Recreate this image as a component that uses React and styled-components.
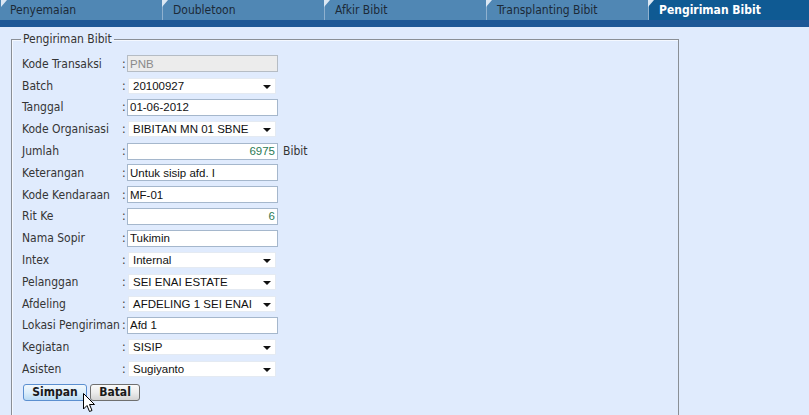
import React from 'react';
import styled, { createGlobalStyle } from 'styled-components';

const GlobalStyle = createGlobalStyle`
  html, body {
    margin: 0;
    padding: 0;
    background: #e0ebfd;
    overflow: hidden;
  }
  body {
    font-family: "DejaVu Sans Condensed", "DejaVu Sans", sans-serif;
    font-size: 12px;
    color: #333;
  }
`;

const Page = styled.div`
  width: 809px;
  height: 415px;
  overflow: hidden;
  background: #e0ebfd;
`;

const TabBar = styled.div`
  display: flex;
  height: 20px;
  background: #5087b4;
`;

const Tab = styled.div`
  position: relative;
  width: 162px;
  flex: none;
  box-sizing: border-box;
  line-height: 20px;
  font-size: 12px;
  color: ${(p) => (p.active ? '#ffffff' : '#1c2a38')};
  font-weight: ${(p) => (p.active ? 'bold' : 'normal')};
  background: ${(p) => (p.active ? '#0f5a93' : '#5087b4')};
  border-left: 1px solid ${(p) => (p.first ? 'transparent' : '#8fb1cf')};
  padding-left: ${(p) => (p.first ? '9px' : '10px')};

  &::before {
    content: '';
    position: absolute;
    left: ${(p) => (p.first ? '0' : '-1px')};
    top: 0;
    width: 0;
    height: 0;
    border-top: 7px solid #dbe7f3;
    border-right: 6px solid transparent;
  }
`;

const Strip = styled.div`
  height: 7px;
  background: #1e5897;
`;

const Content = styled.div`
  padding: 5px 0 0 11px;
`;

const Fieldset = styled.fieldset`
  margin: 0;
  width: 668px;
  height: 420px;
  box-sizing: border-box;
  padding: 1px 0 0 10px;
  border: 1px solid #8a8f96;
  box-shadow: inset 1px 1px 0 #f4f8ff;
`;

const Legend = styled.legend`
  padding: 0 2px;
  margin-left: -1px;
  font-size: 12px;
  line-height: 14px;
  color: #333;
`;

const Form = styled.div`
  display: grid;
  grid-template-columns: 100px 5px auto;
  grid-auto-rows: 21.8px;
  align-items: center;
  margin-top: 6px;
`;

const Label = styled.div`
  font-size: 12px;
  color: #353535;
  white-space: nowrap;
`;

const Colon = styled.div`
  font-size: 12px;
  color: #353535;
`;

const Field = styled.div`
  display: flex;
  align-items: center;
  gap: 5px;
`;

const TextInput = styled.input`
  box-sizing: border-box;
  width: 151px;
  height: 17px;
  margin: 0;
  padding: 0 2px;
  border: 1px solid ${(p) => (p.disabled ? '#b5bcc4' : '#a5b7cc')};
  background: ${(p) => (p.disabled ? '#ececec' : '#ffffff')};
  font-family: "Liberation Sans", Arial, sans-serif;
  font-size: 11.5px;
  color: ${(p) => (p.disabled ? '#8a8a8a' : p.numeric ? '#2b7a55' : '#111')};
  text-align: ${(p) => (p.numeric ? 'right' : 'left')};
  outline: none;
`;

const SelectBox = styled.div`
  position: relative;
  box-sizing: border-box;
  width: 148px;
  height: 16px;
  margin-left: 1px;
  padding-left: 4px;
  border: 1px solid #e4eaf2;
  background: #ffffff;
  font-family: "Liberation Sans", Arial, sans-serif;
  font-size: 11.5px;
  line-height: 14px;
  color: #111;
  white-space: nowrap;

  &::after {
    content: '';
    position: absolute;
    right: 4px;
    top: 6px;
    border-left: 4px solid transparent;
    border-right: 4px solid transparent;
    border-top: 4px solid #111;
  }
`;

const Unit = styled.span`
  font-size: 12px;
  color: #353535;
`;

const Buttons = styled.div`
  position: relative;
  display: flex;
  gap: 3px;
  margin: 4px 0 0 1px;
`;

const Button = styled.button`
  box-sizing: border-box;
  height: 17px;
  width: ${(p) => p.w}px;
  padding: 0;
  font-family: "DejaVu Sans Condensed", "DejaVu Sans", sans-serif;
  font-weight: bold;
  font-size: 12px;
  line-height: 14px;
  color: #1a1a1a;
  border-radius: 3px;
  border: 1px solid ${(p) => (p.primary ? '#5b8fd0' : '#6f6f6f')};
  background: ${(p) =>
    p.primary
      ? 'linear-gradient(#f2f8fd, #dceefb 50%, #b9dbf4)'
      : 'linear-gradient(#fafafa, #ececec 50%, #d3d3d3)'};
`;

const Cursor = styled.svg`
  position: absolute;
  left: 60px;
  top: 9px;
`;

const tabs = ['Penyemaian', 'Doubletoon', 'Afkir Bibit', 'Transplanting Bibit', 'Pengiriman Bibit'];

const rows = [
  { label: 'Kode Transaksi', type: 'disabled', value: 'PNB' },
  { label: 'Batch', type: 'select', value: '20100927' },
  { label: 'Tanggal', type: 'text', value: '01-06-2012' },
  { label: 'Kode Organisasi', type: 'select', value: 'BIBITAN MN 01 SBNE' },
  { label: 'Jumlah', type: 'number', value: '6975', unit: 'Bibit' },
  { label: 'Keterangan', type: 'text', value: 'Untuk sisip afd. I' },
  { label: 'Kode Kendaraan', type: 'text', value: 'MF-01' },
  { label: 'Rit Ke', type: 'number', value: '6' },
  { label: 'Nama Sopir', type: 'text', value: 'Tukimin' },
  { label: 'Intex', type: 'select', value: 'Internal' },
  { label: 'Pelanggan', type: 'select', value: 'SEI ENAI ESTATE' },
  { label: 'Afdeling', type: 'select', value: 'AFDELING 1 SEI ENAI' },
  { label: 'Lokasi Pengiriman', type: 'text', value: 'Afd 1' },
  { label: 'Kegiatan', type: 'select', value: 'SISIP' },
  { label: 'Asisten', type: 'select', value: 'Sugiyanto' },
];

const renderField = (row) => {
  if (row.type === 'select') return <SelectBox>{row.value}</SelectBox>;
  return (
    <TextInput
      readOnly
      value={row.value}
      disabled={row.type === 'disabled'}
      numeric={row.type === 'number' ? 1 : 0}
    />
  );
};

const App = () => (
  <Page>
    <GlobalStyle />
    <TabBar>
      {tabs.map((t, i) => (
        <Tab key={t} first={i === 0} active={i === tabs.length - 1}>
          {t}
        </Tab>
      ))}
    </TabBar>
    <Strip />
    <Content>
      <Fieldset>
        <Legend>Pengiriman Bibit</Legend>
        <Form>
          {rows.map((row) => (
            <React.Fragment key={row.label}>
              <Label>{row.label}</Label>
              <Colon>:</Colon>
              <Field>
                {renderField(row)}
                {row.unit && <Unit>{row.unit}</Unit>}
              </Field>
            </React.Fragment>
          ))}
        </Form>
        <Buttons>
          <Button primary w={64}>Simpan</Button>
          <Button w={50}>Batal</Button>
          <Cursor width="13" height="21" viewBox="0 0 13 21">
            <path
              d="M0.5 0.5 L0.5 16 L4 12.5 L6.5 18.5 L9 17.5 L6.5 11.5 L11.5 11.5 Z"
              fill="#ffffff"
              stroke="#000000"
              strokeWidth="1"
              strokeLinejoin="miter"
            />
          </Cursor>
        </Buttons>
      </Fieldset>
    </Content>
  </Page>
);

export default App;
